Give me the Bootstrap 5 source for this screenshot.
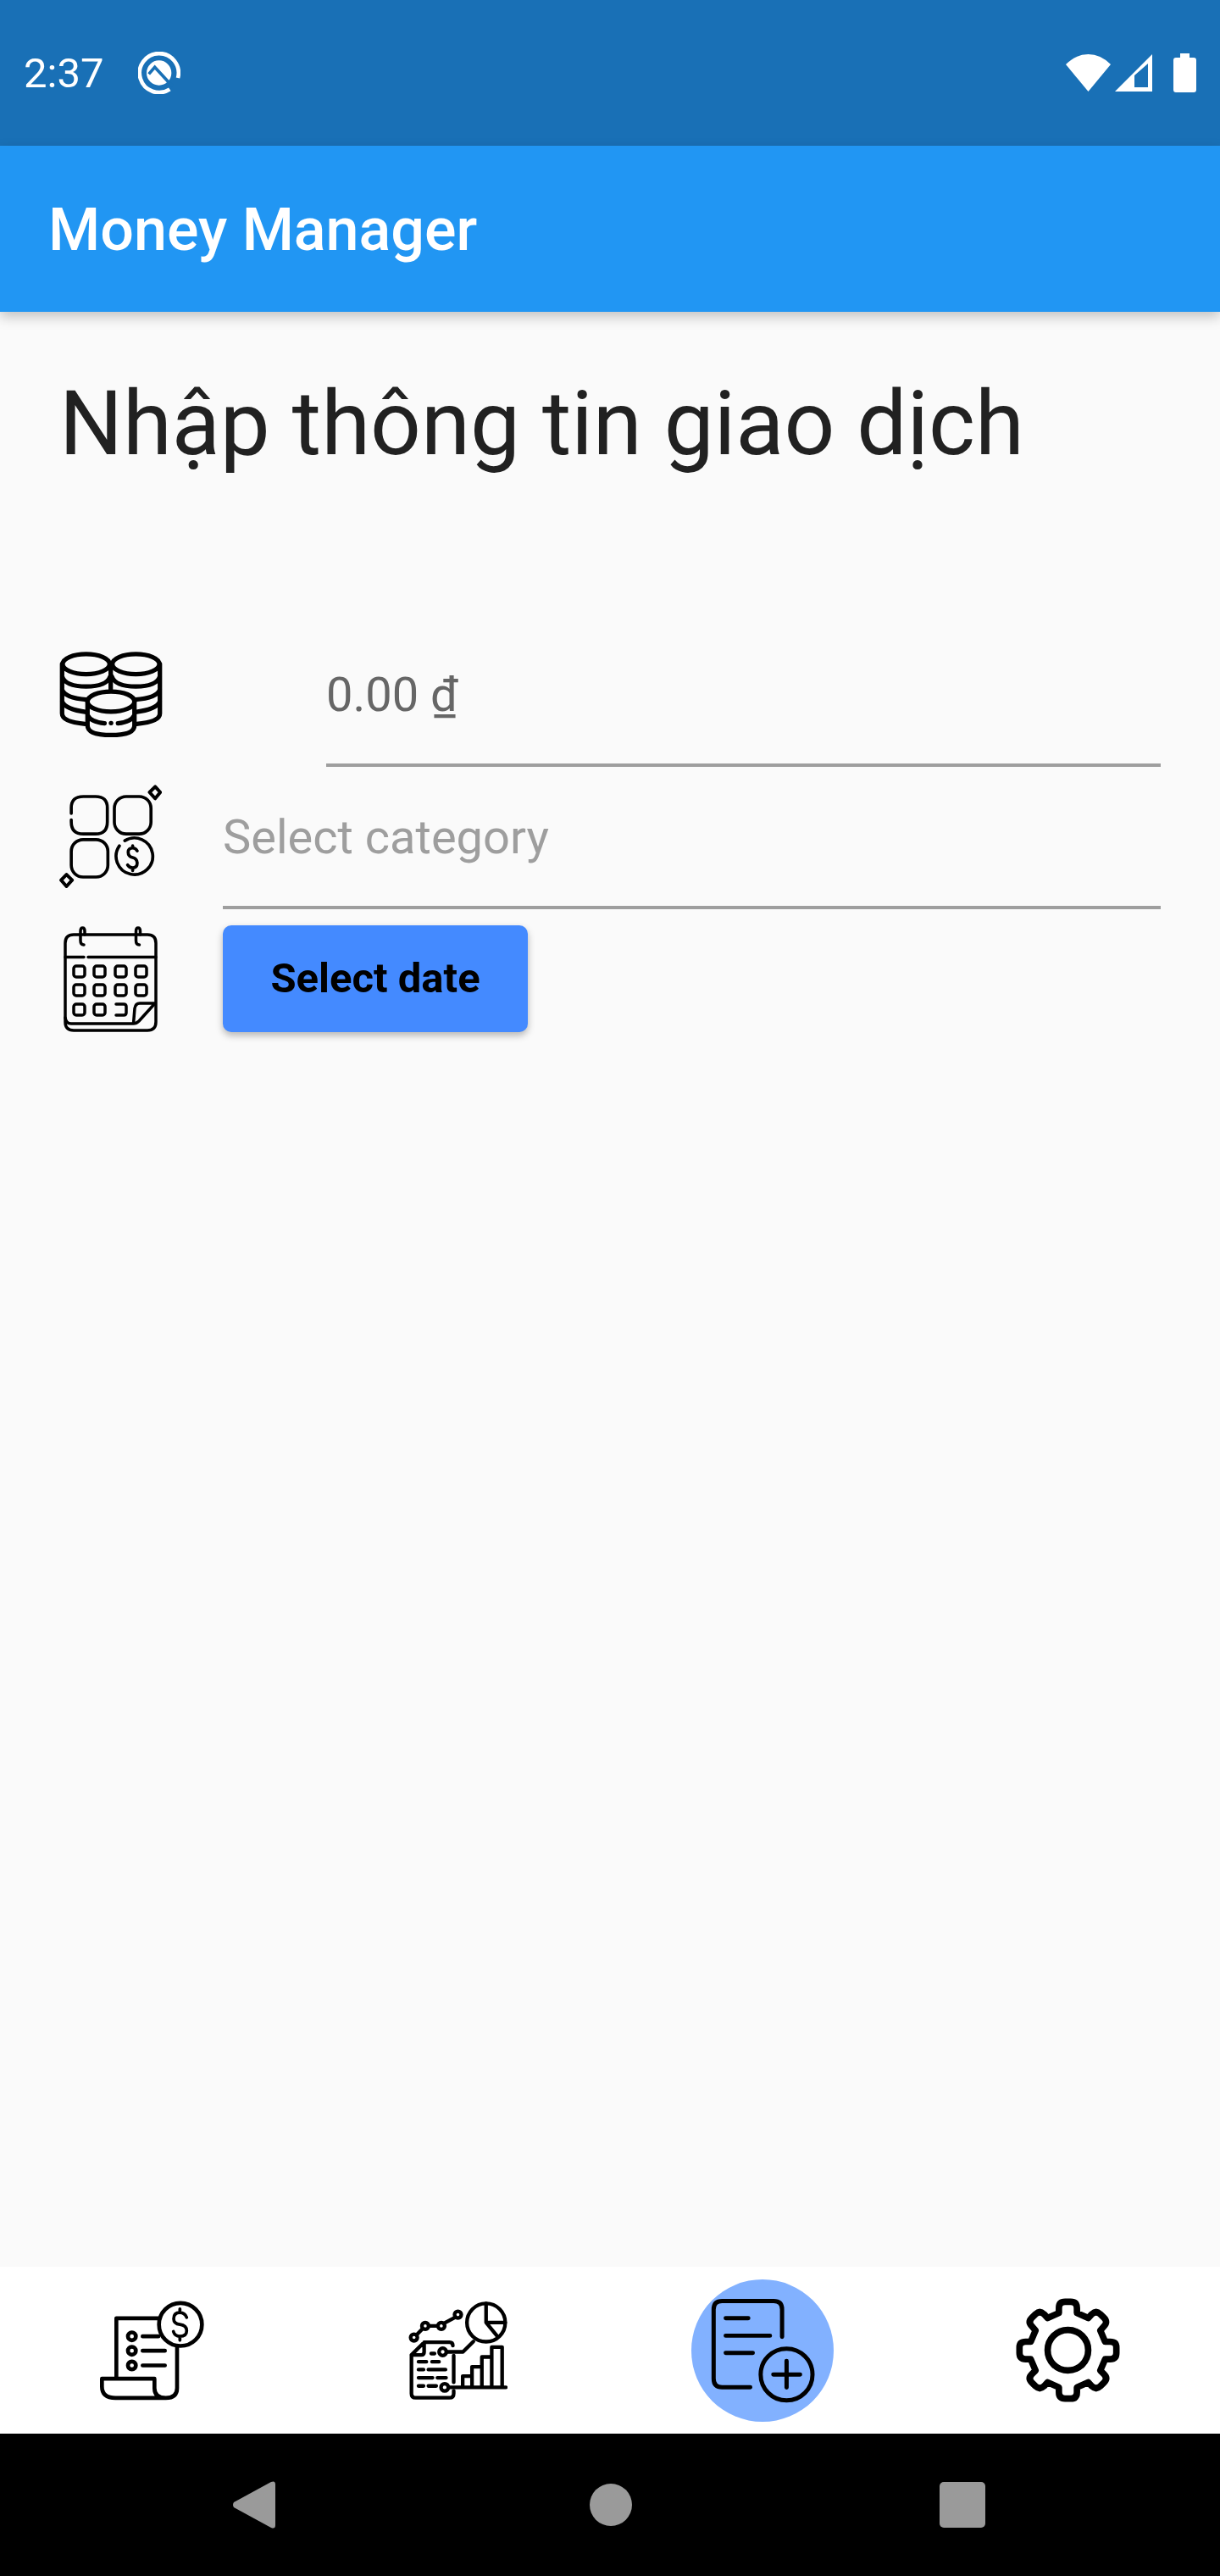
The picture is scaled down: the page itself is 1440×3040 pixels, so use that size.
<!DOCTYPE html>
<html lang="en">
<head>
    <meta charset="UTF-8">
    <meta name="viewport" content="width=device-width, initial-scale=1.0">
    <title>Money Manager</title>
    <link href="https://cdn.jsdelivr.net/npm/bootstrap@5.3.0/dist/css/bootstrap.min.css" rel="stylesheet">
    <style>
        body {
            font-family: Roboto, "Liberation Sans", sans-serif;
            background: #fafafa;
        }
        .phone-shell {
            height: 3040px;
        }
        .status-strip {
            height: 172px;
            background: #1970b6;
            color: #fff;
            padding: 0 28px 0 28px;
        }
        .status-time {
            font-size: 49px;
            line-height: 1;
            margin-right: 41px;
        }
        .status-batt {
            margin-left: 25px;
        }
        .status-wifi {
            margin-right: 5px;
        }
        .app-strip {
            height: 196px;
            background: #2196f3;
            padding: 2px 57px 0;
            box-shadow: 0 6px 14px rgba(0, 0, 0, .22);
        }
        .app-title {
            font-size: 70px;
            font-weight: 500;
            color: #fff;
            padding: 0;
            margin: 0;
        }
        .page-title {
            font-size: 105px;
            font-weight: 400;
            line-height: 1.2;
            color: #212121;
            margin: 70px 0 0 70px;
        }
        .entry-form {
            padding: 0 70px;
            margin-top: 205px;
        }
        .icon-slot {
            width: 122px;
            flex-shrink: 0;
        }
        .amount-field {
            margin-left: 193px;
        }
        .wide-field {
            margin-left: 71px;
        }
        .field-text {
            font-size: 56px;
            line-height: 102px;
            padding-bottom: 30px;
            border-bottom: 4px solid #9e9e9e;
        }
        .amount-text {
            color: #666;
        }
        .hint-text {
            color: #9e9e9e;
        }
        .category-row {
            padding-top: 32px;
        }
        .category-row .icon-slot {
            margin-top: -11px;
        }
        .date-row {
            margin-top: 19px;
        }
        .date-btn {
            width: 360px;
            height: 126px;
            background: #448aff;
            border: 0;
            border-radius: 10px;
            color: #000;
            font-size: 49px;
            font-weight: 700;
            box-shadow: 0 4px 8px rgba(0, 0, 0, .28);
        }
        .tab-strip {
            height: 197px;
            background: #fff;
        }
        .tab-cell {
            width: 360px;
        }
        .tab-active {
            width: 168px;
            height: 168px;
            background: #82b1ff;
        }
        .sys-strip {
            height: 168px;
            background: #000;
            padding-left: 275px;
        }
        .sys-home {
            width: 50px;
            height: 50px;
            margin-left: 371px;
            background: #9a9a9a;
        }
        .sys-recent {
            width: 54px;
            height: 54px;
            margin-left: 363px;
            background: #9a9a9a;
            border-radius: 5px;
        }
        .line-icon {
            fill: none;
            stroke: #000;
            stroke-linecap: round;
            stroke-linejoin: round;
        }
    </style>
</head>
<body>
    <div class="phone-shell d-flex flex-column overflow-hidden">
        <div class="status-strip d-flex align-items-center">
            <span class="status-time">2:37</span>
            <svg width="50" height="50" viewBox="38 37 150 150">
                <path d="M179 130A69 69 0 1 0 150 170" fill="none" stroke="#fff" stroke-width="14"/>
                <circle cx="112" cy="112" r="44" fill="#fff"/>
                <path d="M76 116 97 92 160 160" fill="none" stroke="#1970b6" stroke-width="11"/>
            </svg>
            <div class="ms-auto d-flex align-items-center">
                <svg width="53" height="44" viewBox="0 0 53 44" class="status-wifi">
                    <path d="M26.500 44 0 12Q12 0 26.500 0T53 12Z" fill="#fff"/>
                </svg>
                <svg width="44" height="44" viewBox="0 0 44 44">
                    <path fill="#fff" fill-rule="evenodd" d="M0 44 44 0V44ZM23 25V39H39V11Z"/>
                </svg>
                <svg width="27" height="46" viewBox="0 0 27 46" class="status-batt">
                    <path fill="#fff" d="M8 0H19V5H24Q27 5 27 8V43Q27 46 24 46H3Q0 46 0 43V8Q0 5 3 5H8Z"/>
                </svg>
            </div>
        </div>

        <nav class="navbar app-strip">
            <span class="navbar-brand app-title">Money Manager</span>
        </nav>

        <main class="flex-grow-1">
            <h1 class="page-title">Nhập thông tin giao dịch</h1>

            <div class="entry-form">
                <div class="d-flex align-items-start">
                    <div class="icon-slot">
                        <svg class="d-block line-icon" width="122" height="102" viewBox="88 84 370 308" stroke-width="16">
                            <ellipse cx="184" cy="128" rx="84" ry="36"/>
                            <ellipse cx="362" cy="128" rx="84" ry="36"/>
                            <path d="M98 128V305Q98 335 180 342M98 172Q110 208 184 208T270 172M98 220Q110 250 185 255M98 262Q110 290 185 300"/>
                            <path d="M448 128V305Q448 335 365 342M276 172Q288 208 362 208T448 172M360 255Q436 250 448 220M360 300Q436 290 448 262"/>
                            <path d="M272 128V220"/>
                            <ellipse cx="273" cy="262" rx="84" ry="36"/>
                            <path d="M189 262V348Q189 382 273 382T357 348V262M189 310Q200 335 250 340M298 340Q346 335 357 310M273 339H273.500"/>
                        </svg>
                    </div>
                    <div class="amount-field flex-grow-1 field-text amount-text">0.00 ₫</div>
                </div>

                <div class="category-row d-flex align-items-start">
                    <div class="icon-slot">
                        <svg class="d-block line-icon" width="121" height="122" viewBox="30 33 363 367" stroke-width="11">
                            <path d="M72 135V115Q72 75 115 75H158Q200 75 200 115V165Q200 208 158 208H115Q72 208 72 165V158"/>
                            <rect x="225" y="75" width="130" height="133" rx="42"/>
                            <rect x="72" y="228" width="130" height="133" rx="42"/>
                            <path d="M262 232A65 65 0 1 1 243 250"/>
                            <path d="M306 268Q300 258 290 258Q274 258 274 273Q274 288 290 292Q306 296 306 312Q306 328 290 328Q278 328 272 318M290 250V258M290 328V338"/>
                            <path stroke-width="12" d="M370 40 388 60 370 82 350 60Z"/>
                            <path stroke-width="12" d="M55 352 75 372 55 394 36 372Z"/>
                        </svg>
                    </div>
                    <div class="wide-field flex-grow-1 field-text hint-text">Select category</div>
                </div>

                <div class="date-row d-flex align-items-start">
                    <div class="icon-slot d-flex justify-content-center">
                        <svg class="d-block line-icon" width="112" height="126" viewBox="76 1092 112 126" stroke-width="3.500">
                            <path d="M88 1103H175Q185 1103 185 1113V1206Q185 1216 175 1216H88Q78 1216 78 1206V1113Q78 1103 88 1103Z"/>
                            <path d="M100 1115Q96 1115 96 1110V1099Q96 1095 98.500 1095T101 1099V1103"/>
                            <path d="M165.500 1115Q161.500 1115 161.500 1110V1099Q161.500 1095 164 1095T166.500 1099V1103"/>
                            <path d="M78 1129.500H100M105 1129.500H185"/>
                            <rect x="88" y="1140" width="13" height="13" rx="3"/>
                            <rect x="112" y="1140" width="13" height="13" rx="3"/>
                            <rect x="137" y="1140" width="13" height="13" rx="3"/>
                            <rect x="161" y="1140" width="13" height="13" rx="3"/>
                            <rect x="88" y="1162" width="13" height="13" rx="3"/>
                            <rect x="112" y="1162" width="13" height="13" rx="3"/>
                            <rect x="137" y="1162" width="13" height="13" rx="3"/>
                            <rect x="161" y="1162" width="13" height="13" rx="3"/>
                            <rect x="88" y="1185" width="13" height="13" rx="3"/>
                            <rect x="112" y="1185" width="13" height="13" rx="3"/>
                            <path d="M138 1185H147Q150 1185 150 1188V1195Q150 1198 147 1198H138"/>
                            <path d="M183 1184H166Q161 1184 160 1190L158.500 1208H85Q79 1208 78 1201M158.500 1208Q162 1208 165 1205L184 1184"/>
                        </svg>
                    </div>
                    <button type="button" class="btn date-btn wide-field d-flex align-items-center justify-content-center">Select date</button>
                </div>
            </div>
        </main>

        <div class="tab-strip d-flex align-items-center">
            <div class="tab-cell d-flex justify-content-center">
                <svg class="line-icon" width="124" height="121" viewBox="85 100 372 362" stroke-width="14">
                    <path d="M143 380V168H292M358 270V415Q358 450 318 450H140Q92 450 92 410V382H278V415Q278 450 318 450"/>
                    <circle cx="370" cy="190" r="76"/>
                    <path stroke-width="11" d="M392 165Q385 148 368 148Q346 148 346 170Q346 188 368 190Q392 193 392 212Q392 232 368 232Q350 232 345 215M368 135V148M368 232V246"/>
                    <circle cx="198" cy="232" r="14"/>
                    <circle cx="198" cy="283" r="14"/>
                    <circle cx="198" cy="335" r="14"/>
                    <path d="M236 232H292M236 283H315M236 335H315"/>
                </svg>
            </div>
            <div class="tab-cell d-flex justify-content-center">
                <svg class="line-icon" width="117" height="118" viewBox="95 105 350 355" stroke-width="13">
                    <circle cx="370" cy="183" r="68"/>
                    <path d="M370 115V183H438M370 183 410 232"/>
                    <circle cx="114" cy="236" r="12"/>
                    <circle cx="154" cy="195" r="12"/>
                    <circle cx="211" cy="195" r="12"/>
                    <circle cx="270" cy="155" r="12"/>
                    <path d="M123 227 145 204M166 195H199M220 186 261 164"/>
                    <path d="M105 298 150 253H240Q252 253 252 265M105 298V435Q105 450 120 450H240Q255 450 255 435V425M255 395V300M105 298H140Q150 298 150 288V253"/>
                    <circle cx="216" cy="287" r="13"/>
                    <path d="M230 287H288L325 250"/>
                    <circle cx="223" cy="413" r="13"/>
                    <path d="M237 413H440M287 413V373H320V413M320 373V340H355V413M355 340V305H390V413M390 305V270H427V413"/>
                    <path d="M175 293H187M130 322H158M178 322H203M130 350H148M165 350H226M130 379H180M197 379H228M130 408H148M165 408H193"/>
                </svg>
            </div>
            <div class="tab-cell d-flex justify-content-center">
                <div class="tab-active rounded-circle d-flex align-items-center justify-content-center">
                    <svg class="line-icon" width="125" height="126" viewBox="112 122 376 378" stroke-width="15">
                        <path d="M368 262V165Q368 135 338 135H155Q125 135 125 165V410Q125 441 155 441H255"/>
                        <path d="M168 196H248M168 258H325M168 319H264"/>
                        <circle cx="384" cy="396" r="92"/>
                        <path d="M384 348V442M337 396H432"/>
                    </svg>
                </div>
            </div>
            <div class="tab-cell d-flex justify-content-center">
                <svg class="line-icon" width="123" height="123" viewBox="55 65 370 370" stroke-width="23">
                    <circle cx="240" cy="250" r="72"/>
                    <path d="M208 118V100Q208 78 230 78H250Q272 78 272 100V118L312 136 325 122Q340 108 355 122L368 135Q383 150 368 165L355 180 372 220H390Q412 220 412 240V260Q412 282 390 282H372L355 322 368 335Q383 350 368 365L355 378Q340 392 325 378L312 364 272 382V400Q272 422 250 422H230Q208 422 208 400V382L168 364 155 378Q140 392 125 378L112 365Q97 350 112 335L125 322 108 282H90Q68 282 68 260V240Q68 220 90 220H108L125 180 112 165Q97 150 112 135L125 122Q140 108 155 122L168 136Z"/>
                </svg>
            </div>
        </div>

        <div class="sys-strip d-flex align-items-center">
            <svg width="50" height="56" viewBox="0 0 50 56">
                <path fill="#9a9a9a" d="M1 31Q-1 28 1 25L45 1Q50 -1 50 4V52Q50 57 45 55Z"/>
            </svg>
            <div class="sys-home rounded-circle"></div>
            <div class="sys-recent"></div>
        </div>
    </div>
    <script src="https://cdn.jsdelivr.net/npm/bootstrap@5.3.0/dist/js/bootstrap.bundle.min.js"></script>
</body>
</html>
